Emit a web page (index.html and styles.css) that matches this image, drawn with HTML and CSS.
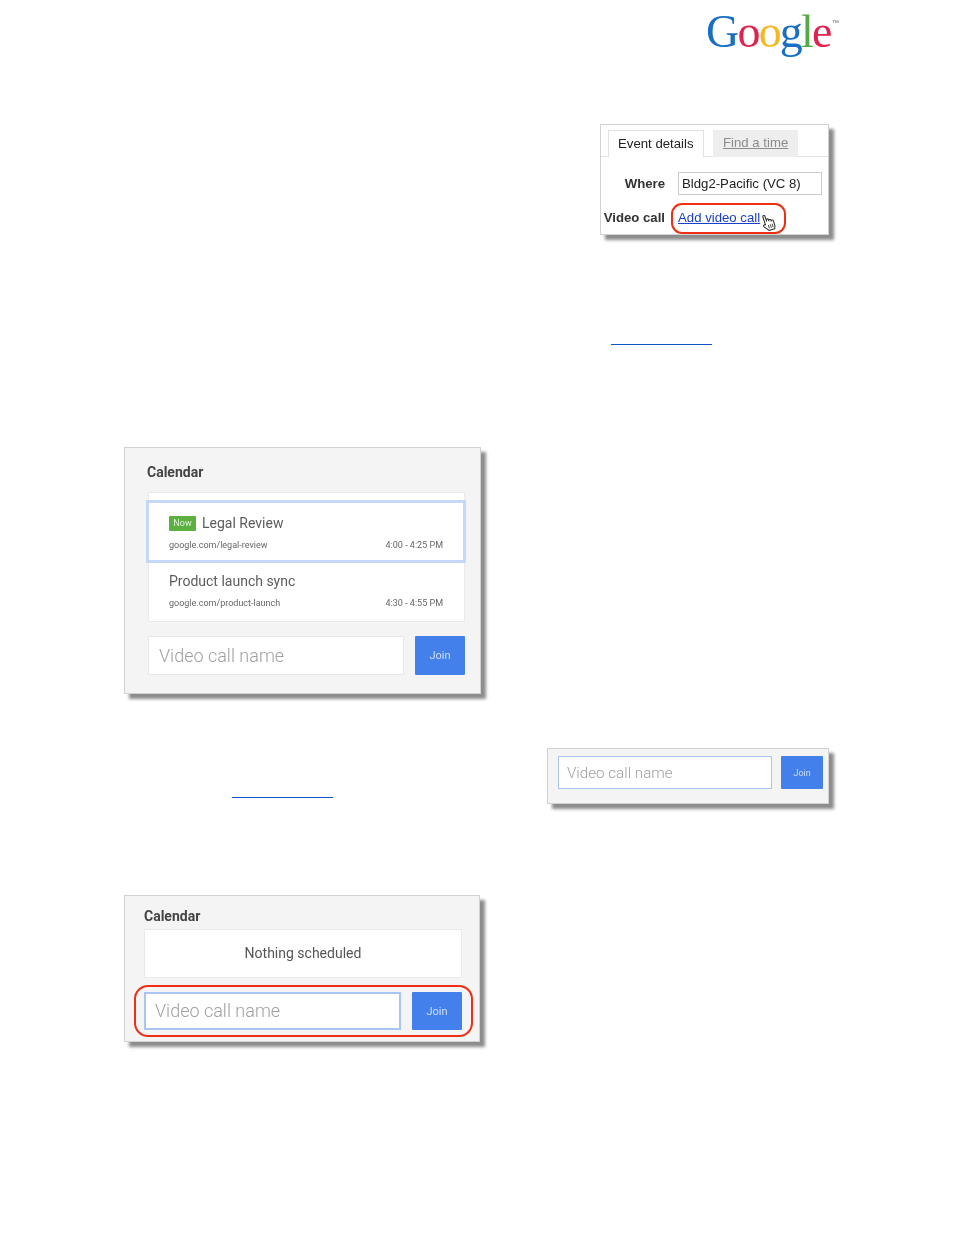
FILE: index.html
```html
<!DOCTYPE html>
<html lang="en">
<head>
    <meta charset="UTF-8">
    <title>Video call</title>
    <link rel="stylesheet" href="styles.css">
</head>
<body>
    <div class="page">
        <div class="logo-row">
            <div class="logo"><span class="blue">G</span><span class="red">o</span><span class="yellow">o</span><span class="blue">g</span><span class="green">l</span><span class="red">e</span><span class="tm">™</span></div>
        </div>

        <div class="event-row">
            <div class="event shot">
                <div class="tabs">
                    <div class="tab active">Event details</div>
                    <div class="tab muted">Find a time</div>
                </div>
                <div class="field where">
                    <div class="label">Where</div>
                    <div class="where-input">Bldg2-Pacific (VC 8)</div>
                </div>
                <div class="field video">
                    <div class="label">Video call</div>
                    <a class="add-link" href="#">Add video call</a>
                </div>
                <div class="ring ring-link"></div>
                <svg class="hand" width="18" height="20" viewBox="0 0 18 20">
                    <g transform="rotate(-18 9 10) translate(1.500 .5)">
                        <path d="M4.500 10V2.200c0-1.600 2.200-1.600 2.200 0V7.500V6.400c0-1.400 2.200-1.400 2.200 0v1.300c0-1.300 2.200-1.300 2.200 0v1c0-1.100 2.200-1.100 2.200 0v4.800c0 1.500-.8 2.300-1.100 3.500H6.200c-.5-1.300-2.200-3-3.500-4.800-1-1.500.4-2.800 1.800-1.700z" fill="#fff" stroke="#2a2a2a" stroke-width="1" stroke-linejoin="round"/>
                        <path d="M7.200 11.500v3.500M9.200 11.500v3.500M11.200 11.500v3.500" stroke="#444" stroke-width=".9" fill="none"/>
                    </g>
                </svg>
            </div>
        </div>

        <div class="rule-row"><span class="rule"></span></div>

        <div class="calendar shot">
            <div class="cal-title">Calendar</div>
            <div class="cal-list">
                <div class="cal-item current">
                    <div class="item-name"><span class="now">Now</span>Legal Review</div>
                    <div class="item-sub"><span>google.com/legal-review</span><span>4:00 - 4:25 PM</span></div>
                </div>
                <div class="cal-item">
                    <div class="item-name">Product launch sync</div>
                    <div class="item-sub"><span>google.com/product-launch</span><span>4:30 - 4:55 PM</span></div>
                </div>
            </div>
            <div class="join-row">
                <div class="name-input">Video call name</div>
                <div class="join-btn">Join</div>
            </div>
        </div>

        <div class="join-band">
            <span class="rule"></span>
            <div class="small-join shot">
                <div class="name-input focus">Video call name</div>
                <div class="join-btn">Join</div>
            </div>
        </div>

        <div class="calendar empty shot">
            <div class="cal-title">Calendar</div>
            <div class="nothing">Nothing scheduled</div>
            <div class="join-row">
                <div class="name-input focus">Video call name</div>
                <div class="join-btn">Join</div>
            </div>
            <div class="ring ring-join"></div>
        </div>
    </div>
</body>
</html>
```

FILE: styles.css
```css
*{
    margin: 0px;
    padding: 0px;
    box-sizing: border-box;
}
body{
    background-color: #fff;
    font-family: "Roboto", "Liberation Sans", sans-serif;
    color: #555;
}
.page{
    width: 954px;
    height: 1235px;
    padding-left: 124px;
    display: flex;
    flex-direction: column;
    overflow: hidden;
}
.shot{
    position: relative;
    background-color: #f4f4f4;
    border: 1px solid #d2d2d2;
    box-shadow: 5px 5px 3px #8c8c8c;
    filter: blur(0.35px);
}

/* logo */
.logo-row{
    height: 124px;
    padding-left: 582px;
    padding-top: 4px;
}
.logo{
    position: relative;
    width: 134px;
    font-family: "Liberation Serif", serif;
    font-size: 46px;
    line-height: 56px;
    letter-spacing: -1.8px;
    filter: blur(0.5px);
}
.blue{ color: #1a6fc4; }
.red{ color: #e0234e; }
.yellow{ color: #f5b821; }
.green{ color: #54a845; }
.logo .tm{
    position: absolute;
    top: 14px;
    right: 1px;
    font-family: "Liberation Sans", sans-serif;
    font-size: 7px;
    line-height: 10px;
    letter-spacing: 0px;
    color: #666;
}

/* event details */
.event-row{
    height: 111px;
    padding-left: 476px;
}
.event{
    width: 229px;
    height: 111px;
    background-color: #fff;
    font-family: "Liberation Sans", sans-serif;
    font-size: 13.2px;
    color: #222;
}
.tabs{
    height: 32px;
    padding: 5px 0px 0px 7px;
    display: flex;
    gap: 9px;
    border-bottom: 1px solid #e2e2e2;
}
.tab{
    height: 27px;
    padding: 0px 9px;
    line-height: 26px;
    white-space: nowrap;
}
.tab.active{
    width: 96px;
    background-color: #fff;
    border: 1px solid #e2e2e2;
    border-bottom: 0px;
}
.tab.muted{
    width: 85px;
    padding-left: 10px;
    background-color: #eee;
    color: #8c8c8c;
    text-decoration: underline;
}
.field{
    display: flex;
    align-items: center;
}
.field .label{
    width: 64px;
    margin-right: 13px;
    text-align: right;
    font-weight: bold;
    color: #333;
    white-space: nowrap;
}
.where{
    margin-top: 15px;
    height: 23px;
}
.where-input{
    width: 144px;
    height: 23px;
    padding-left: 3px;
    border: 1px solid #ccc;
    line-height: 21px;
    background-color: #fff;
}
.video{
    margin-top: 11px;
    height: 23px;
}
.add-link{
    color: #1a3fc8;
}
.ring{
    position: absolute;
    border: 2px solid #ee2f14;
    border-radius: 11px;
}
.ring-link{
    left: 70px;
    top: 78px;
    width: 115px;
    height: 31px;
}
.hand{
    position: absolute;
    left: 158px;
    top: 88px;
}

/* rule under the link text */
.rule-row{
    height: 212px;
    padding-top: 109px;
    padding-left: 487px;
}
.rule{
    display: block;
    width: 101px;
    height: 1px;
    background-color: #1155cc;
}

/* calendar card */
.calendar{
    width: 357px;
    height: 247px;
    padding: 0px 15px 0px 23px;
}
.cal-title{
    font-size: 14px;
    font-weight: 700;
    color: #444;
    line-height: 20px;
    margin-top: 14px;
    margin-left: -1px;
}
.cal-list{
    width: 317px;
    height: 130px;
    margin-top: 10px;
    padding-top: 7px;
    background-color: #fff;
    border: 1px solid #eaeaea;
}
.cal-item{
    position: relative;
    height: 63px;
    margin-bottom: -5px;
    margin-left: -3px;
    margin-right: -2px;
    padding: 10px 20px 0px 20px;
    border: 3px solid transparent;
}
.cal-item.current{
    border-color: #c6d8f8;
}
.cal-item + .cal-item{
    margin-top: 2px;
    padding-top: 8px;
}
.item-name{
    display: flex;
    align-items: center;
    height: 20px;
    font-size: 14px;
    color: #5c5c5c;
}
.now{
    width: 27px;
    height: 15px;
    margin-right: 6px;
    background-color: #5bb040;
    border-radius: 1px;
    color: #e4f3df;
    font-size: 9px;
    line-height: 15px;
    text-align: center;
}
.item-sub{
    display: flex;
    justify-content: space-between;
    height: 12px;
    margin-top: 6px;
    font-size: 9px;
    line-height: 12px;
    color: #666;
}
.join-row{
    display: flex;
    gap: 11px;
    margin-top: 14px;
}
.name-input{
    width: 256px;
    height: 39px;
    padding-left: 10px;
    background-color: #fff;
    border: 1px solid #e8e8e8;
    font-size: 18px;
    font-weight: 300;
    line-height: 37px;
    color: #a0a0a0;
}
.name-input.focus{
    border-color: #a9c4f5;
}
.join-btn{
    width: 50px;
    height: 39px;
    background-color: #4480ec;
    border-radius: 1px;
    color: #cfdffa;
    font-size: 11px;
    line-height: 39px;
    text-align: center;
}

/* band with second rule and small input card */
.join-band{
    height: 201px;
    padding-top: 54px;
    display: flex;
    justify-content: space-between;
    align-items: flex-start;
}
.join-band .rule{
    margin-top: 49px;
    margin-left: 108px;
}
.small-join{
    width: 282px;
    height: 56px;
    margin-right: 125px;
    padding: 7px 5px 0px 10px;
    display: flex;
    gap: 9px;
}
.small-join .name-input{
    width: 215px;
    height: 33px;
    padding-left: 8px;
    font-size: 15.200px;
    line-height: 33px;
}
.small-join .join-btn{
    width: 42px;
    height: 33px;
    font-size: 9px;
    line-height: 35px;
}

/* empty calendar */
.calendar.empty{
    width: 356px;
    height: 147px;
    padding: 0px 17px 0px 19px;
}
.empty .cal-title{
    margin-top: 10px;
    margin-left: 0px;
}
.nothing{
    width: 318px;
    height: 49px;
    margin-top: 3px;
    background-color: #fff;
    border: 1px solid #eaeaea;
    font-size: 14px;
    line-height: 47px;
    text-align: center;
}
.empty .join-row{
    margin-top: 14px;
}
.empty .name-input{
    width: 257px;
    height: 38px;
    padding-left: 9px;
    border-width: 2px;
    line-height: 34px;
}
.empty .join-btn{
    height: 38px;
}
.ring-join{
    left: 9px;
    top: 89px;
    width: 339px;
    height: 52px;
    border-radius: 14px;
}
```
